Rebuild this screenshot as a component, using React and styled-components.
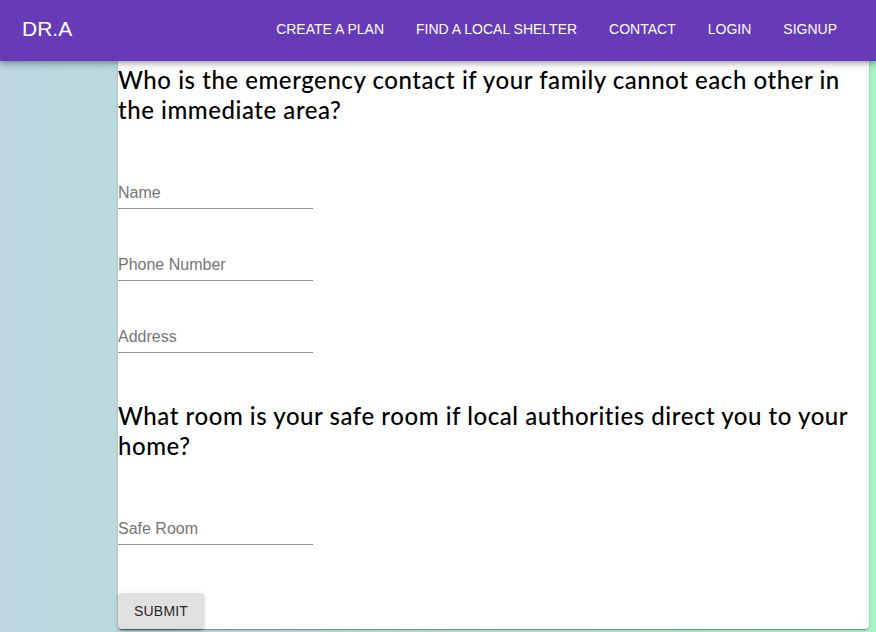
import React from 'react'
import styled, { createGlobalStyle } from 'styled-components'

const GlobalStyle = createGlobalStyle`
  html, body {
    margin: 0;
    padding: 0;
  }
  body {
    background: linear-gradient(to right, #bdd6e0 0%, #b6e0d8 40%, #a9f1c7 100%);
    min-height: 632px;
    overflow: hidden;
    font-family: "Liberation Sans", Arial, sans-serif;
  }
`

const NavBar = styled.header`
  height: 61px;
  box-sizing: border-box;
  padding: 0 23px 3px 22px;
  background: #673ab7;
  color: #fff;
  display: flex;
  align-items: center;
  box-shadow: 0 2px 4px -1px rgba(0,0,0,0.2), 0 4px 5px 0 rgba(0,0,0,0.14), 0 1px 10px 0 rgba(0,0,0,0.12);
  position: relative;
  z-index: 2;
`

const Logo = styled.div`
  font-size: 21px;
  flex: 1;
`

const NavLinks = styled.nav`
  display: flex;
  align-items: center;
`

const NavLink = styled.a`
  color: #fff;
  font-size: 14px;
  padding: 0 16px;
  text-decoration: none;
  text-transform: uppercase;
`

const Card = styled.main`
  margin-left: 118px;
  width: 751px;
  background: #fff;
  border-radius: 0 0 4px 4px;
  box-shadow: 0 2px 1px -1px rgba(0,0,0,0.2), 0 1px 1px 0 rgba(0,0,0,0.14), 0 1px 3px 0 rgba(0,0,0,0.12);
  padding-top: 4px;
  height: 564px;
  display: flex;
  flex-direction: column;
  align-items: flex-start;
`

const Question = styled.h2`
  font-family: Lato, "Noto Sans", sans-serif;
  font-weight: 500;
  font-size: 24px;
  line-height: 30px;
  letter-spacing: 0.55px;
  color: #000;
  margin: ${p => p.$top || 0}px 0 12px;
`

const Field = styled.div`
  margin-top: 39px;
  width: 195px;
  border-bottom: 1px solid #949494;
`

const Input = styled.input`
  display: block;
  width: 100%;
  box-sizing: border-box;
  border: none;
  outline: none;
  background: transparent;
  padding: 7px 0 6px;
  height: 32px;
  font-family: "Liberation Sans", Arial, sans-serif;
  font-size: 16px;
  color: #222;
  &::placeholder {
    color: #757575;
  }
`

const SubmitButton = styled.button`
  margin-top: auto;
  height: 36px;
  padding: 6px 16px;
  border: none;
  border-radius: 4px;
  background: #e0e0e0;
  color: rgba(0,0,0,0.87);
  font-family: "Liberation Sans", Arial, sans-serif;
  font-size: 14px;
  text-transform: uppercase;
  letter-spacing: 0.2px;
  box-shadow: 0 3px 1px -2px rgba(0,0,0,0.2), 0 2px 2px 0 rgba(0,0,0,0.14), 0 1px 5px 0 rgba(0,0,0,0.12);
  cursor: pointer;
`

const links = ['Create a plan', 'Find a local shelter', 'Contact', 'Login', 'Signup']

export default function App() {
  return (
    <>
      <GlobalStyle />
      <NavBar>
        <Logo>DR.A</Logo>
        <NavLinks>
          {links.map(l => <NavLink key={l} href="#">{l}</NavLink>)}
        </NavLinks>
      </NavBar>
      <Card>
        <Question>
          Who is the emergency contact if your family cannot each other in the immediate area?
        </Question>
        <Field><Input placeholder="Name" /></Field>
        <Field><Input placeholder="Phone Number" /></Field>
        <Field><Input placeholder="Address" /></Field>
        <Question $top={48}>
          What room is your safe room if local authorities direct you to your home?
        </Question>
        <Field><Input placeholder="Safe Room" /></Field>
        <SubmitButton>Submit</SubmitButton>
      </Card>
    </>
  )
}
